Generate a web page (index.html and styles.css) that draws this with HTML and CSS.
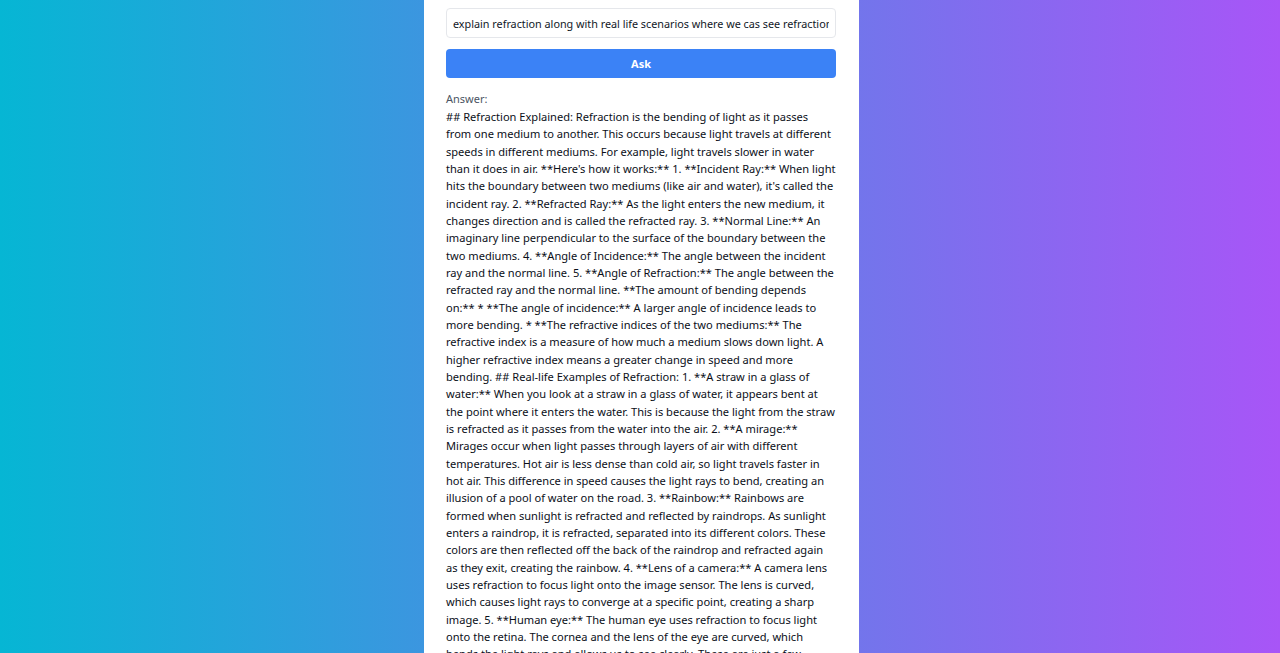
FILE: index.html
```html
<!DOCTYPE html>
<html lang="en">
<head>
<meta charset="utf-8">
<title>Ask</title>
<link rel="stylesheet" href="styles.css">
</head>
<body>
<main class="page">
  <section class="card">
    <input class="question" type="text" value="explain refraction along with real life scenarios where we cas see refraction in our daily life">
    <button class="ask" type="button">Ask</button>
    <div class="result">
      <div class="label">Answer:</div>
      <p class="answer">## Refraction Explained: Refraction is the bending of light as it passes from one medium to another. This occurs because light travels at different speeds in different mediums. For example, light travels slower in water than it does in air. **Here's how it works:** 1. **Incident Ray:** When light hits the boundary between two mediums (like air and water), it's called the incident ray. 2. **Refracted Ray:** As the light enters the new medium, it changes direction and is called the refracted ray. 3. **Normal Line:** An imaginary line perpendicular to the surface of the boundary between the two mediums. 4. **Angle of Incidence:** The angle between the incident ray and the normal line. 5. **Angle of Refraction:** The angle between the refracted ray and the normal line. **The amount of bending depends on:** * **The angle of incidence:** A larger angle of incidence leads to more bending. * **The refractive indices of the two mediums:** The refractive index is a measure of how much a medium slows down light. A higher refractive index means a greater change in speed and more bending. ## Real-life Examples of Refraction: 1. **A straw in a glass of water:** When you look at a straw in a glass of water, it appears bent at the point where it enters the water. This is because the light from the straw is refracted as it passes from the water into the air. 2. **A mirage:** Mirages occur when light passes through layers of air with different temperatures. Hot air is less dense than cold air, so light travels faster in hot air. This difference in speed causes the light rays to bend, creating an illusion of a pool of water on the road. 3. **Rainbow:** Rainbows are formed when sunlight is refracted and reflected by raindrops. As sunlight enters a raindrop, it is refracted, separated into its different colors. These colors are then reflected off the back of the raindrop and refracted again as they exit, creating the rainbow. 4. **Lens of a camera:** A camera lens uses refraction to focus light onto the image sensor. The lens is curved, which causes light rays to converge at a specific point, creating a sharp image. 5. **Human eye:** The human eye uses refraction to focus light onto the retina. The cornea and the lens of the eye are curved, which bends the light rays and allows us to see clearly. These are just a few examples of how refraction shapes the world around us.</p>
    </div>
  </section>
</main>
</body>
</html>
```
FILE: styles.css
```css
* { box-sizing: border-box; }
html, body { margin: 0; height: 100%; }
body {
  background: linear-gradient(to right, #06b6d4, #a855f7);
  font-family: "Noto Sans", "Open Sans", sans-serif;
  color: #111827;
  overflow: hidden;
}
.page {
  display: flex;
  justify-content: center;
  min-height: 100%;
}
.card {
  width: 435px;
  margin-left: 3px;
  background: #ffffff;
  padding: 8px 23px 40px 22px;
  display: flex;
  flex-direction: column;
}
.question {
  width: 100%;
  height: 30px;
  border: 1px solid #e5e7eb;
  border-radius: 4px;
  padding: 0 6px;
  font-family: inherit;
  font-size: 10.8px;
  color: #111827;
  outline: none;
}
.ask {
  margin-top: 11px;
  height: 29px;
  width: 100%;
  border: 0;
  border-radius: 4px;
  background: #3b82f6;
  color: #ffffff;
  font-family: inherit;
  font-weight: 700;
  font-size: 11px;
}
.result { margin-top: 13px; }
.label {
  font-size: 11px;
  color: #4b5563;
  line-height: 16px;
}
.answer {
  margin: 1px 0 0;
  font-size: 11.085px;
  line-height: 17.33px;
  color: #0b0f19;
}
```
